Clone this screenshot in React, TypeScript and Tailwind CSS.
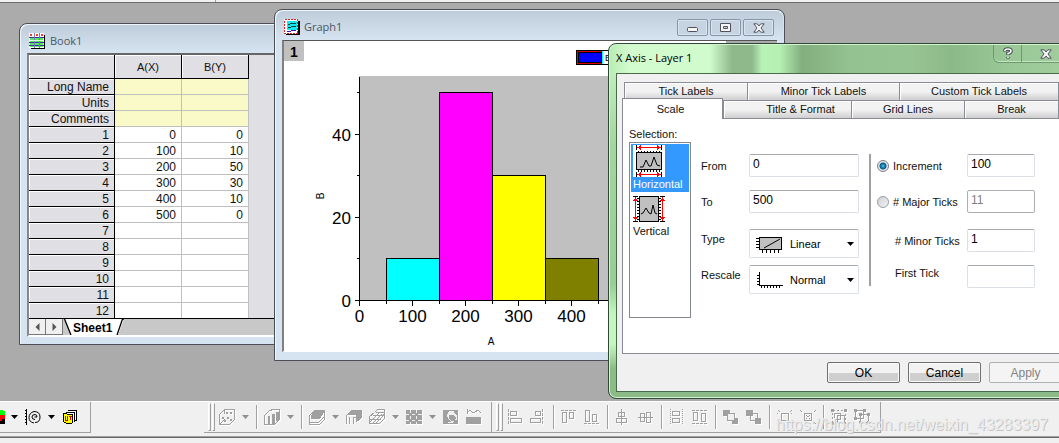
import type { ReactNode } from 'react';
import { clsx } from 'clsx';

const sheetRows = [
  ['1', '0', '0'],
  ['2', '100', '10'],
  ['3', '200', '50'],
  ['4', '300', '30'],
  ['5', '400', '10'],
  ['6', '500', '0'],
  ['7', '', ''],
  ['8', '', ''],
  ['9', '', ''],
  ['10', '', ''],
  ['11', '', ''],
  ['12', '', ''],
];

const bars = [
  { x: 100, value: 10, color: '#00ffff' },
  { x: 200, value: 50, color: '#ff00ff' },
  { x: 300, value: 30, color: '#ffff00' },
  { x: 400, value: 10, color: '#808000' },
];

function BookIcon() {
  return (
    <svg width="17" height="17" viewBox="0 0 17 17" shapeRendering="crispEdges" aria-hidden="true">
      <path d="M2 2h14v14H2z" fill="#000" />
      <path d="M0 0h15v15H0z" fill="#fff" />
      <path d="M1 5h13v9H1z" fill="#5be65b" />
      <path d="M0 4.500h15M0 9.500h15M0 12.500h15" stroke="#35359c" fill="none" />
      <path d="M5.500 0v15M10.500 0v15" stroke="#7a7ac0" fill="none" />
      <path d="M1 1h2v2H1zM7 1h2v2H7zM12 1h2v2h-2z" fill="#f33" />
      <path d="M0 7.500h15" stroke="#d8ffd8" />
    </svg>
  );
}

function GraphIcon() {
  return (
    <svg width="17" height="17" viewBox="0 0 17 17" shapeRendering="crispEdges" aria-hidden="true">
      <path d="M2 2h14v14H2z" fill="#000" />
      <path d="M0 0h14v15H0z" fill="#fff" />
      <path d="M.5.5h13v14H.5z" fill="none" stroke="#d22" strokeDasharray="2 1" />
      <path d="M3 2h10v9H3z" fill="#18e4ec" />
      <path d="M4 5h2l2-1h4M4 8h3l2-1h3" fill="none" stroke="#044" />
      <path d="M3 12h4l2-1h3" fill="none" stroke="#31b" />
    </svg>
  );
}

function CaptionButton({ label, children }: { label: string; children: ReactNode }) {
  return (
    <button
      type="button"
      aria-label={label}
      className="flex h-[17px] w-[31px] items-center justify-center rounded-xs border border-[#8794a6] bg-[#c6d4e2] shadow-[inset_0_0_0_1px_#d8e4f0]"
    >
      {children}
    </button>
  );
}

function CloseGlyph() {
  return (
    <svg width="12" height="10" viewBox="0 0 12 10" aria-hidden="true">
      <path d="M.8.8h3.4L6 3 7.800.8h3.400L8 5l3.200 4.200H7.800L6 7 4.200 9.200H.8L4 5z" fill="#f5f5f5" stroke="#50535f" strokeLinejoin="round" />
    </svg>
  );
}

function BookWindow() {
  return (
    <section className="absolute left-[19px] top-5 flex w-[300px] flex-col rounded-t-lg border border-[#4b4f55] bg-[#d6e4f1] px-[7px] pb-[7px] shadow-[inset_1px_1px_0_#eef5fb]">
      <header className="-mx-[6px] mt-px flex h-[28px] items-center gap-1 rounded-t-lg bg-linear-to-b from-[#bfcddb] to-[#d6e4f1] pl-2 pt-1">
        <BookIcon />
        <h2 className="font-['Open_Sans',sans-serif] text-[11px] text-[#4c5560]">Book1</h2>
      </header>
      <div className="border-b-2 border-l-2 border-t-2 border-b-white border-l-[#888] border-t-[#666] bg-[#e0dfe4]">
        <div className="h-[264px] overflow-hidden border-b border-black">
          <table className="border-separate border-spacing-0 text-right text-xs leading-[14px] text-[#111]">
            <thead>
              <tr className="h-6 text-center text-[11px]">
                <th className="w-[86px] border-b border-r border-black shadow-[inset_1px_1px_0_#fff]" />
                <th className="w-[67px] border-b border-r border-black font-normal shadow-[inset_1px_1px_0_#fff]">A(X)</th>
                <th className="w-[67px] border-b border-r border-black font-normal shadow-[inset_1px_1px_0_#fff]">B(Y)</th>
              </tr>
            </thead>
            <tbody>
              {['Long Name', 'Units', 'Comments'].map((name) => (
                <tr key={name}>
                  <th className="h-4 border-b border-r border-black pr-[5px] pt-px font-normal shadow-[inset_1px_1px_0_#fff]">{name}</th>
                  <td className="border-b border-r border-[#c0c0c0] bg-[#fafac8]" />
                  <td className="border-b border-r border-[#c0c0c0] bg-[#fafac8]" />
                </tr>
              ))}
              {sheetRows.map(([n, a, b]) => (
                <tr key={n}>
                  <th className="h-4 border-b border-r border-black pr-[5px] pt-px font-normal shadow-[inset_1px_1px_0_#fff]">{n}</th>
                  <td className="border-b border-r border-[#c0c0c0] bg-white pr-[5px] pt-px">{a}</td>
                  <td className="border-b border-r border-[#c0c0c0] bg-white pr-[5px] pt-px">{b}</td>
                </tr>
              ))}
            </tbody>
          </table>
        </div>
        <div className="flex h-4 bg-[#c8c8c8]">
          {['Previous sheet', 'Next sheet'].map((label, i) => (
            <button key={label} type="button" aria-label={label} className="flex w-[17px] items-center justify-center border-b border-r border-[#777] bg-[#f0f0f0]">
              <svg width="5" height="8" viewBox="0 0 5 8" className={clsx(i === 1 && 'rotate-180')} aria-hidden="true">
                <path d="M4.500 0v8L.5 4z" fill="#555" />
              </svg>
            </button>
          ))}
          <button type="button" className="relative h-4 w-[62px] pl-[10px] text-left text-xs font-bold leading-[18px] text-black">
            <svg width="62" height="16" viewBox="0 0 62 16" className="absolute left-0 top-0" aria-hidden="true">
              <path d="M1 0h60l-6 16H8z" fill="#fff" />
              <path d="M1.500 0L8 16M61 0h-1.500L54 16" fill="none" stroke="#000" strokeWidth="1.300" />
            </svg>
            <span className="relative">Sheet1</span>
          </button>
        </div>
      </div>
    </section>
  );
}

// data units to pixels: 53px per 100 on X, 4.16px per 1 on Y
const px = (v: number) => Math.floor(75.5 + v * 0.53) + 0.5;
const py = (v: number) => 259.5 - Math.round(v * 4.16);

function HistogramChart() {
  return (
    <svg width="442" height="310" viewBox="0 0 442 310" className="bg-white font-['Liberation_Sans',Arial,sans-serif]" role="img" aria-label="Histogram of B against A">
      <g shapeRendering="crispEdges">
        <rect x="75" y="35" width="300" height="225" fill="#c0c0c0" />
        {bars.map((b) => (
          <rect key={b.x} x={px(b.x - 50)} y={py(b.value)} width="53" height={259.5 - py(b.value)} fill={b.color} stroke="#000" />
        ))}
        <path d="M75.500 36v224M75 259.500h300" stroke="#000" />
        {[0, 20, 40].map((v) => (
          <path key={v} d={`M71 ${py(v)}h4`} stroke="#000" />
        ))}
        {[10, 30, 50].map((v) => (
          <path key={v} d={`M73 ${py(v)}h2`} stroke="#000" />
        ))}
        {[0, 100, 200, 300, 400, 500].map((v) => (
          <path key={v} d={`M${px(v)} 260v5`} stroke="#000" />
        ))}
        {[50, 150, 250, 350, 450].map((v) => (
          <path key={v} d={`M${px(v)} 260v3`} stroke="#000" />
        ))}
        <rect x="292.500" y="9.500" width="110" height="14" fill="#fff" stroke="#000" />
        <rect x="293.500" y="10.500" width="25" height="12" fill="#00f" stroke="#d00" />
        <rect x="294.500" y="11.500" width="23" height="10" fill="#00f" stroke="#000" />
        <path d="M318.500 10v13" stroke="#0ff" />
      </g>
      <g fontSize="17" fill="#000">
        {[0, 20, 40].map((v) => (
          <text key={v} x="67" y={py(v) + 6} textAnchor="end">{v}</text>
        ))}
        {[0, 100, 200, 300, 400, 500].map((v) => (
          <text key={v} x={px(v)} y="281" textAnchor="middle">{v}</text>
        ))}
      </g>
      <text x="207" y="304" fontSize="10" textAnchor="middle">A</text>
      <text x="40" y="155" fontSize="10" textAnchor="middle" transform="rotate(-90 40 155)">B</text>
      <text x="321" y="20" fontSize="9">B</text>
      <rect width="20" height="20" fill="#c0c0c0" />
      <text x="10" y="16" fontSize="14" fontWeight="bold" textAnchor="middle">1</text>
    </svg>
  );
}

function GraphWindow() {
  return (
    <section className="absolute left-[274px] top-[6px] w-[511px] rounded-t-lg border border-[#4b4f55] bg-[#d6e4f1] px-[7px] pb-2 shadow-[inset_1px_1px_0_#eef5fb]">
      <header className="-mx-[6px] mt-px flex h-[29px] items-center gap-[3px] rounded-t-lg bg-linear-to-b from-[#bfcddb] to-[#d6e4f1] pl-2 pr-[9px] pt-1">
        <GraphIcon />
        <h2 className="font-['Open_Sans',sans-serif] text-[11px] text-[#4c5560]">Graph1</h2>
        <div className="ml-auto flex gap-0.5">
          <CaptionButton label="Minimize">
            <svg width="11" height="9" viewBox="0 0 11 9" aria-hidden="true">
              <rect x=".5" y="4.500" width="10" height="4" rx="1" fill="#f5f5f5" stroke="#50535f" />
            </svg>
          </CaptionButton>
          <CaptionButton label="Maximize">
            <svg width="11" height="9" viewBox="0 0 11 9" aria-hidden="true">
              <path d="M.5.5h10v8H.5zM3.500 3.500h4v2h-4z" fill="#f5f5f5" fillRule="evenodd" stroke="#50535f" />
            </svg>
          </CaptionButton>
          <CaptionButton label="Close">
            <CloseGlyph />
          </CaptionButton>
        </div>
      </header>
      <div className="flex overflow-hidden border-b border-l-2 border-t border-b-white border-l-[#808080] border-t-[#555] bg-[#ababab]">
        <HistogramChart />
      </div>
    </section>
  );
}

function RangeIcon({ vertical = false }: { vertical?: boolean }) {
  if (vertical) {
    return (
      <svg width="32" height="26" viewBox="0 0 32 26" shapeRendering="crispEdges" aria-hidden="true">
        <rect x="6.500" y=".5" width="19" height="25" fill="#c0c0c0" stroke="#000" />
        <path d="M5 2v23M27 2v23" stroke="#000" strokeWidth="2" strokeDasharray="1 2" />
        <path d="M0 .5h5M0 25.500h5M27 .5h5M27 25.500h5" stroke="#000" />
        <path d="M2.500 2v22M29.500 2v22" stroke="#f00" />
        <path d="M2.500 1L0 5h5zM2.500 25L0 21h5zM29.500 1L27 5h5zM29.500 25L27 21h5z" fill="#f00" />
        <path d="M8 18l2-1 3-5 3 5 2 1 2-9 2 8 2 1" fill="none" stroke="#000" shapeRendering="auto" />
      </svg>
    );
  }
  return (
    <svg width="32" height="32" viewBox="0 0 32 32" shapeRendering="crispEdges" className="bg-white" aria-hidden="true">
      <rect x="3.500" y="7.500" width="25" height="17" fill="#c0c0c0" stroke="#000" />
      <path d="M5 6.500h23M5 26h23" stroke="#000" strokeWidth="2" strokeDasharray="1 2" />
      <path d="M3.500 0v5M28.500 0v5M3.500 27v5M28.500 27v5" stroke="#000" />
      <path d="M5 2.500h22M5 29.500h22" stroke="#f00" />
      <path d="M4 2.500L8 0v5zM28 2.500L24 0v5zM4 29.500L8 27v5zM28 29.500L24 27v5z" fill="#f00" />
      <path d="M7 22h3l3-7 3 6h2l3-9 3 8 3 1" fill="none" stroke="#000" shapeRendering="auto" />
    </svg>
  );
}

const tabClass =
  'flex h-[18px] items-center justify-center border-l border-t border-[#898c95] bg-linear-to-b from-[#f2f2f2] from-50% to-[#d2d2d2] to-95% shadow-[inset_1px_1px_0_#fff]';

const fieldClass = 'h-[23px] w-full rounded-xs border border-[#dbdfe6] border-t-[#a5a8ac] bg-white px-[3px] pb-[3px] text-xs text-black';

function PickList({ id, value, children }: { id: string; value: string; children: ReactNode }) {
  return (
    <div className="relative h-[29px]">
      <select id={id} defaultValue={value} className="h-full w-full appearance-none rounded-xs border border-[#dbdfe6] border-t-[#a5a8ac] bg-white pl-10 text-black">
        <option>{value}</option>
      </select>
      <span className="pointer-events-none absolute left-[6px] top-[6px]">{children}</span>
      <svg width="7" height="4" viewBox="0 0 7 4" className="pointer-events-none absolute right-[5px] top-[13px]" aria-hidden="true">
        <path d="M0 0h7L3.500 4z" />
      </svg>
    </div>
  );
}

function AxisDialog() {
  return (
    <section
      role="dialog"
      aria-labelledby="axis-title"
      className="absolute left-[608px] top-10 w-[466px] rounded-lg border border-[#2f4a34] bg-[linear-gradient(180deg,#cdf7c9_0px,#a5d5a1_100px,#98cd94_240px,#c5f6c1_270px,#c5f6c1_300px,#8dbb88_325px)] pb-[6px] pl-[7px] pr-[5px] shadow-[inset_0_0_0_1px_#d5f3d2]"
    >
      <header className="-ml-[6px] -mr-1 mt-px flex h-[28px] items-start rounded-t-md bg-[linear-gradient(90deg,#b9edb5_0px,#d3fbcf_20px,#d0fbcc_100px,#8fb98b_122px,#8fb98b_142px,#b9f2b6_152px,#b5efb2_170px,#83ae7f_192px,#94c290_240px,#97c592_300px,#8cb988_340px,#9ac896_400px,#a2cd9e_460px)] pl-[6px]">
        <h2 id="axis-title" className="pt-1 font-['Open_Sans',sans-serif] text-[11px] leading-[18px] text-black">X Axis - Layer 1</h2>
        <div className="ml-auto mr-px flex h-[18px] rounded-b-md border border-t-0 border-[#6e9a6d] shadow-[inset_0_-1px_0_#c6e5c4]">
          <button type="button" aria-label="Help" className="flex w-[28px] items-center justify-center border-r border-[#6e9a6d]">
            <svg width="10" height="13" viewBox="0 0 10 13" aria-hidden="true">
              <path d="M2 4.500V3.500Q2 2 5 2t3 2Q8 5.500 5 6.500V8M5 10v1.500" fill="none" stroke="#444f55" strokeWidth="3.600" />
              <path d="M2 4V3.500Q2 2 5 2t3 2Q8 5.500 5 6.500V7.500M5 10v1" fill="none" stroke="#fff" strokeWidth="1.600" />
            </svg>
          </button>
          <button type="button" aria-label="Close dialog" className="flex w-[48px] items-center justify-center">
            <CloseGlyph />
          </button>
        </div>
      </header>
      <div className="border border-[#48694a] bg-[#f0f0f0] px-[5px] pb-2 pt-2 text-[11px] text-[#111]">
        <div role="tablist" className="pl-0.5 pr-[3px]">
          <div className="flex border-r border-[#898c95]">
            <button type="button" role="tab" className={clsx(tabClass, 'w-[123px]')}>Tick Labels</button>
            <button type="button" role="tab" className={clsx(tabClass, 'w-[152px]')}>Minor Tick Labels</button>
            <button type="button" role="tab" className={clsx(tabClass, 'flex-1')}>Custom Tick Labels</button>
          </div>
          <div className="flex border-r border-[#898c95]">
            <button
              type="button"
              role="tab"
              aria-selected="true"
              className="relative z-10 -mb-px -ml-0.5 -mt-0.5 h-[21px] w-[101px] border border-b-0 border-[#898c95] bg-white pr-1"
            >
              Scale
            </button>
            <button type="button" role="tab" className={clsx(tabClass, 'w-[128px] pl-[26px]')}>Title &amp; Format</button>
            <button type="button" role="tab" className={clsx(tabClass, 'w-[113px]')}>Grid Lines</button>
            <button type="button" role="tab" className={clsx(tabClass, 'flex-1')}>Break</button>
          </div>
        </div>

        <div role="tabpanel" className="flex h-[236px] border border-[#898c95] bg-white pl-[6px] pr-[26px] pt-2">
          <div className="w-[62px] shrink-0">
            <p className="h-[15px] leading-[15px]">Selection:</p>
            <div className="flex h-[176px] flex-col border border-[#828790] p-px">
              <button type="button" className="h-[48px] shrink-0 bg-[#3399ff] pl-0.5 text-left leading-[15px] text-white">
                <RangeIcon />
                <span className="block">Horizontal</span>
              </button>
              <button type="button" className="pl-0.5 pt-1 text-left leading-[15px]">
                <RangeIcon vertical />
                <span className="block pt-0.5">Vertical</span>
              </button>
            </div>
          </div>

          <div className="ml-[10px] mt-[27px] grid shrink-0 grid-cols-[48px_110px] grid-rows-[36px_39px_36px_29px] items-start leading-6">
            <label htmlFor="from">From</label>
            <input id="from" defaultValue="0" className={fieldClass} />
            <label htmlFor="to">To</label>
            <input id="to" defaultValue="500" className={fieldClass} />
            <label htmlFor="type" className="leading-5">Type</label>
            <PickList id="type" value="Linear">
              <svg width="28" height="18" viewBox="0 0 28 18" shapeRendering="crispEdges" aria-hidden="true">
                <rect x="4.500" y="2.500" width="22" height="12" fill="#c0c0c0" stroke="#000" />
                <path d="M2.500 3v12" stroke="#000" strokeWidth="3" strokeDasharray="1 2" />
                <path d="M7 16h17" stroke="#000" strokeWidth="3" strokeDasharray="1 3" />
                <path d="M9 13L25 4" fill="none" stroke="#000" shapeRendering="auto" />
              </svg>
            </PickList>
            <label htmlFor="rescale" className="leading-5">Rescale</label>
            <PickList id="rescale" value="Normal">
              <svg width="28" height="18" viewBox="0 0 28 18" shapeRendering="crispEdges" aria-hidden="true">
                <path d="M4.500 1v13.500H28" fill="none" stroke="#000" />
                <path d="M3 4v10" stroke="#000" strokeWidth="2" strokeDasharray="1 2" />
                <path d="M6 16h20" stroke="#000" strokeWidth="2" strokeDasharray="1 2" />
              </svg>
            </PickList>
          </div>

          <div className="ml-[10px] mt-[27px] h-[132px] w-0.5 shrink-0 bg-[#a0a0a0]" />

          <div className="ml-[6px] mt-[27px] grid flex-1 grid-cols-[90px_1fr] grid-rows-[36px_39px_36px_23px] items-start leading-6">
            <label className="flex h-[23px] items-center gap-1">
              <input
                type="radio"
                name="ticks"
                defaultChecked
                className="size-3 appearance-none rounded-full border border-[#7d8085] bg-[#e8ebee] checked:bg-[radial-gradient(circle,#3fc0f0_0px,#0b5785_3px,#e4e8ec_4px)]"
              />
              Increment
            </label>
            <input aria-label="Increment value" defaultValue="100" className={fieldClass} />
            <label className="flex h-6 items-center gap-1">
              <input type="radio" name="ticks" className="size-3 appearance-none rounded-full border border-[#9a9da2] bg-linear-to-br from-[#cfd2d6] to-[#f2f2f2]" />
              # Major Ticks
            </label>
            <input aria-label="Major tick count" defaultValue="11" disabled className="h-[23px] w-full rounded-xs border border-[#abadb3] bg-white px-[3px] pb-[3px] text-xs text-[#808080]" />
            <label htmlFor="minor" className="pl-[18px]"># Minor Ticks</label>
            <input id="minor" defaultValue="1" className={fieldClass} />
            <label htmlFor="first" className="pl-[18px] leading-4">First Tick</label>
            <input id="first" className={fieldClass} />
          </div>
        </div>

        <div className="mt-2 flex justify-end gap-2">
          {['OK', 'Cancel'].map((label) => (
            <button
              key={label}
              type="button"
              className="h-[21px] w-[73px] rounded-xs border border-[#707070] bg-linear-to-b from-[#f2f2f2] from-50% to-[#cfcfcf] to-55% text-xs text-black shadow-[inset_0_0_0_1px_#fafafa]"
            >
              {label}
            </button>
          ))}
          <button type="button" disabled className="h-[21px] w-[73px] rounded-xs border border-[#adb2b5] bg-[#f4f4f4] text-xs text-[#838383]">
            Apply
          </button>
        </div>
      </div>
    </section>
  );
}

/* ---- bottom toolbars ---- */

function Tool({ label, color = false, children }: { label: string; color?: boolean; children: ReactNode }) {
  return (
    <button type="button" aria-label={label} className={clsx('flex w-[23px] shrink-0 items-center justify-center', color ? 'text-black' : 'text-[#a0a0a0]')}>
      <svg
        width="17"
        height="16"
        viewBox="0 0 17 16"
        fill="none"
        stroke="currentColor"
        shapeRendering="crispEdges"
        className={clsx(!color && 'drop-shadow-[1px_1px_0_#fff]')}
        aria-hidden="true"
      >
        {children}
      </svg>
    </button>
  );
}

function Drop({ label, color = false }: { label: string; color?: boolean }) {
  return (
    <button type="button" aria-label={label} className={clsx('flex w-[14px] shrink-0 items-center justify-center', color ? 'text-black' : 'text-[#909090]')}>
      <svg width="8" height="4" viewBox="0 0 8 4" fill="currentColor" aria-hidden="true">
        <path d="M0 0h7L3.500 4z" />
      </svg>
    </button>
  );
}

function Divider() {
  return <span className="mx-[3px] my-[3px] w-0.5 shrink-0 border-l border-r border-l-[#a0a0a0] border-r-white" />;
}

function Grip() {
  return (
    <span className="mr-px flex shrink-0 gap-px py-px pl-1">
      <span className="w-[3px] border border-white border-b-[#a0a0a0] border-r-[#a0a0a0]" />
      <span className="w-[3px] border border-white border-b-[#a0a0a0] border-r-[#a0a0a0]" />
    </span>
  );
}

function PlotTools() {
  return (
    <div className="flex border-b border-r border-[#a0a0a0] pr-[5px]">
      <Grip />
      <Tool label="3D scatter">
        <path d="M.5 5.500l5-5h10v10l-5 5H.5zM5.500.5v4M.5 15.500l5-5" />
        <path d="M7 3h2v2H7zM11 3h2v2h-2zM3 8h2v2H3zM8 8h2v2H8zM11 10h2v2h-2zM5 11h2v2H5z" fill="currentColor" stroke="none" />
      </Tool>
      <Drop label="3D scatter types" />
      <Divider />
      <Tool label="3D bars">
        <path d="M.5 6.500l5-5 4-1h6v10l-5 5H.500zM4.500 8v7" />
        <path d="M4 7h1v8H4zM8 5h2v9H8zM12 3h2v8h-2z" fill="currentColor" />
      </Tool>
      <Drop label="3D bar types" />
      <Divider />
      <Tool label="3D surface">
        <path d="M.5 6.500l5-5h10v9l-5 5H.5z" />
        <path d="M2 7l4-5h9l-4 7H2z" fill="currentColor" />
        <path d="M1 13h9l5-5" />
      </Tool>
      <Drop label="3D surface types" />
      <Tool label="3D ribbons">
        <path d="M1 6l5-5h9v8l-5 4V8H7v7M.5 6v9M3.500 8v7" />
        <path d="M2 5l4-4h9v8l-5 4V6z" fill="currentColor" />
      </Tool>
      <Tool label="3D wire frame">
        <path d="M.5 7.500l5-4 3-3h7v9l-5 5H.5zM1 10.500h10l4-5M1 13l9-9M4 14l9-9M4 6.500h11M7 3.500h8M7 14l8-8" />
      </Tool>
      <Drop label="Wire frame types" />
      <Tool label="Heat map">
        <path d="M0 1h16v14H0z" fill="currentColor" stroke="none" />
        <path d="M4.500 0v4M10.500 0v4M0 5.500h3M6 5.500h3M12 5.500h4M4.500 7v3M10.500 7v3M0 11.500h3M6 11.500h3M12 11.500h4M4.500 13v3M10.500 13v3" stroke="#f0f0f0" />
      </Tool>
      <Drop label="Heat map types" />
      <Tool label="Image plot">
        <path d="M.5 1.500h14v13H.5z" fill="currentColor" />
        <path d="M6 2h5v2l3 3v3l-2 3H9l-4-3-1-4z" fill="#f0f0f0" stroke="none" />
        <path d="M6 6h5l2 3-2 3H8L6 9zM1 12h3v3H1zM11 11h4v4h-4z" fill="currentColor" stroke="none" />
        <path d="M5 13.500h5" stroke="#f0f0f0" />
      </Tool>
      <Tool label="Image profiles">
        <path d="M1.500 0v5M1 4l3-3 3 3 2-1 3-2 3 3" />
        <path d="M0 8h15v7H0z" fill="currentColor" stroke="none" />
      </Tool>
    </div>
  );
}

function AlignTools() {
  return (
    <div className="flex border-b border-r border-[#a0a0a0] pr-[6px]">
      <Grip />
      <Tool label="Align left">
        <path d="M1.500 0v16" strokeDasharray="3 1" />
        <path d="M3.500 2.500h6v4h-6zM3.500 9.500h11v4h-11z" />
      </Tool>
      <Tool label="Align right">
        <path d="M12.500 0v16" strokeDasharray="3 1" />
        <path d="M5.500 2.500h5v4h-5zM.5 9.500h10v4H.5z" />
      </Tool>
      <Divider />
      <Tool label="Align top">
        <path d="M0 1.500h16" strokeDasharray="3 1" />
        <path d="M1.500 3.500h4v10h-4zM8.500 3.500h4v6h-4z" />
      </Tool>
      <Tool label="Align bottom">
        <path d="M0 14.500h16" strokeDasharray="3 1" />
        <path d="M1.500 1.500h4v11h-4zM8.500 5.500h4v7h-4z" />
      </Tool>
      <Divider />
      <Tool label="Center vertically">
        <path d="M6.500 0v16M3.500 3.500h6v4h-6zM1.500 9.500h10v4h-10z" />
      </Tool>
      <Tool label="Center horizontally">
        <path d="M0 8.500h15M2.500 4.500h4v8h-4zM8.500 3.500h4v10h-4z" />
      </Tool>
      <Divider />
      <Tool label="Same width">
        <path d="M1.500 0v16M13.500 0v16" strokeDasharray="1 1" />
        <path d="M3.500 2.500h7v4h-7zM3.500 9.500h7v4h-7z" />
      </Tool>
      <Tool label="Same height">
        <path d="M0 1.500h16M0 14.500h16" strokeDasharray="3 1" />
        <path d="M1.500 3.500h4v8h-4zM9.500 4.500h4v8h-4z" />
      </Tool>
      <Divider />
      <Tool label="Bring to front">
        <path d="M0 1h7v6H0zM9 9h6v6H9z" fill="currentColor" stroke="none" />
        <path d="M4.500 4.500h7v7h-7z" fill="#f0f0f0" />
      </Tool>
      <Tool label="Send to back">
        <path d="M4.500 4.500h7v7h-7z" />
        <path d="M0 1h7v6H0zM9 9h6v6H9z" fill="currentColor" stroke="none" />
      </Tool>
      <Divider />
      <Tool label="Enlarge">
        <path d="M4.500 4.500h7v7h-7z" />
        <path d="M0 4h2M0 11h2M14 4h2M14 11h2M1 1l2 2M13 3l2-2M1 15l2-2M13 13l2 2" strokeDasharray="1 1" />
      </Tool>
      <Tool label="Shrink">
        <path d="M4.500 4.500h7v7h-7z" />
        <path d="M6 6l4 4M10 6l-4 4M0 1l3 3M16 1l-3 3M0 15l3-3M16 15l-3-3" strokeDasharray="1 1" />
      </Tool>
      <Divider />
      <Tool label="Group">
        <path d="M1.500 1.500h13v13h-13z" strokeDasharray="2 2" />
        <path d="M3.500 4.500h6v6h-6zM6.500 6.500h7v7h-7z" />
        <path d="M0 0h3v3H0zM13 0h3v3h-3zM0 13h3v3H0z" fill="currentColor" stroke="none" />
      </Tool>
      <Tool label="Ungroup">
        <path d="M1.500 1.500h8v8h-8zM6.500 5.500h8v8h-8z" />
        <path d="M0 0h3v3H0zM9 0h3v3H9zM0 8h3v3H0zM5 4h3v3H5zM13 4h3v3h-3zM5 12h3v3H5zM13 12h3v3h-3z" fill="currentColor" stroke="none" />
      </Tool>
    </div>
  );
}

export default function App() {
  return (
    <div className="flex h-screen flex-col overflow-hidden bg-[#f0f0f0] font-['Liberation_Sans',Arial,sans-serif]">
      <div className="flex h-[3px] shrink-0 border-b border-[#6d6d6d]">
        <span className="w-[216px] border-r border-[#a0a0a0]" />
      </div>

      <main className="relative flex-1 overflow-hidden bg-[#ababab]">
        <BookWindow />
        <GraphWindow />
        <AxisDialog />
      </main>

      <footer className="relative shrink-0">
        <div className="flex h-8 border-t border-white">
          <div className="flex w-[91px] border-b border-r border-[#a0a0a0]">
            <button type="button" aria-label="Color" className="flex w-2 shrink-0 items-center">
              <svg width="5" height="16" viewBox="0 0 5 16" shapeRendering="crispEdges" aria-hidden="true">
                <path d="M0 9h5v6H0z" />
                <path d="M0 6h5v4H2v2H0z" fill="#f00" />
                <path d="M0 1h3v1h2v4H0z" fill="#0f0" />
              </svg>
            </button>
            <Drop label="Colors" color />
            <Tool label="Contour" color>
              <path d="M1.500 0v16" />
              <path d="M0 1.500h2M0 4.500h2M0 7.500h2M0 10.500h2M0 13.500h2" />
              <path d="M9 14Q4 13 4 8.500T9 2.500q6 0 6 5.500t-5 5.500M10 10.500Q7 10.500 7 8t3-2.500q2 0 2 2.500H9.500" shapeRendering="auto" />
            </Tool>
            <Drop label="Contour types" color />
            <Tool label="Templates" color>
              <path d="M5.500 1.500h9v9l-1 2" fill="#fff" />
              <path d="M3.500 3.500h9v9" fill="#fff" />
              <path d="M1.500 4.500h3l1 1h5v8l-1 1h-5l-3-2z" fill="#ff0" />
              <path d="M3.500 7v4h2V7M8.500 7v4M7 7.500h3" stroke="#d00" />
            </Tool>
          </div>
          <div className="ml-[113px] flex">
            <PlotTools />
            <AlignTools />
          </div>
        </div>
        <div className="h-[10px] pt-[3px]">
          <div className="h-0.5 border-b border-t border-b-[#696969] border-t-[#a0a0a0]" />
        </div>
        <p className="absolute right-[11px] top-[14px] text-base leading-5 text-[#ececec] [text-shadow:1px_1px_0_#c4c4c4]">https://blog.csdn.net/weixin_43283397</p>
      </footer>
    </div>
  );
}
